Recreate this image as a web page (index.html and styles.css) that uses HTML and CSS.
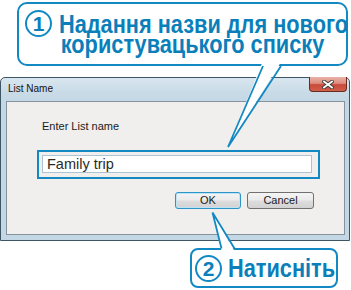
FILE: index.html
```html
<!DOCTYPE html>
<html>
<head>
<meta charset="utf-8">
<link rel="stylesheet" href="styles.css">
</head>
<body>
<div class="page">
  <div class="callout callout-top">
    <span class="num">1</span>
    <div class="ctext">
      <div class="line1">Надання назви для нового</div>
      <div class="line2">користувацького списку</div>
    </div>
  </div>
  <div class="window">
    <div class="titlebar">
      <span class="title">List Name</span>
      <span class="close">
        <svg width="12" height="9" viewBox="0 0 12 9"><path d="M2 1.5 L10 7.5 M10 1.5 L2 7.5" stroke="#3a3a3a" stroke-width="3.6" stroke-linecap="square"/><path d="M2 1.5 L10 7.5 M10 1.5 L2 7.5" stroke="#ffffff" stroke-width="1.8" stroke-linecap="square"/></svg>
      </span>
    </div>
    <div class="panel">
      <div class="label">Enter List name</div>
      <div class="highlight"><div class="input">Family trip</div></div>
      <div class="buttons">
        <div class="btn btn-ok">OK</div>
        <div class="btn">Cancel</div>
      </div>
    </div>
  </div>
  <div class="callout callout-bottom">
    <span class="num">2</span>
    <span class="ctext">Натисніть</span>
  </div>
  <svg class="tails" width="351" height="290" viewBox="0 0 351 290">
    <polygon points="262.5,62 228,147 281,62" fill="#ffffff"/>
    <polyline points="263,66 228,147 281,66" fill="none" stroke="#1389c4" stroke-width="1.8" stroke-linejoin="miter"/>
    <polygon points="212.5,212.5 221.5,251 234.5,251" fill="#ffffff"/>
    <polyline points="221.5,248.5 212.5,212.5 234.5,248.5" fill="none" stroke="#1389c4" stroke-width="1.8"/>
  </svg>
</div>
</body>
</html>
```
FILE: styles.css
```css
* { box-sizing: border-box; }
html, body { margin: 0; padding: 0; background: #ffffff; }
.page {
  position: relative;
  width: 351px;
  height: 290px;
  overflow: hidden;
  font-family: "Liberation Sans", Arial, sans-serif;
}
.callout {
  border: 2px solid #1389c4;
  background: #ffffff;
  display: flex;
  align-items: flex-start;
  color: #0b7fba;
  font-family: "Liberation Sans", Arial, sans-serif;
  font-weight: bold;
}
.callout-top {
  margin: 2px 0 0 17px;
  width: 331px;
  height: 64px;
  border-radius: 10px;
  padding: 6px 0 0 6px;
}
.num {
  flex: none;
  width: 27px;
  height: 27px;
  border: 2px solid #1389c4;
  border-radius: 50%;
  display: flex;
  align-items: center;
  justify-content: center;
  font-family: "Liberation Sans", Arial, sans-serif;
  font-size: 21px;
  line-height: 1;
  font-weight: bold;
  color: #0b7fba;
}
.ctext {
  transform: scaleX(0.87);
  transform-origin: 0 0;
  white-space: nowrap;
  font-size: 25px;
}
.callout-top .ctext {
  margin: 4px 0 0 7px;
  line-height: 20px;
}
.callout-top .line2 { padding-left: 2px; }
.window {
  margin-top: 11px;
  width: 350px;
  height: 164px;
  border: 1px solid #3e5566;
  border-radius: 5px 5px 0 0;
  background: linear-gradient(#d9e6ef 0px, #c9dbe7 14px, #c3d7e4 24px, #c3d7e4 100%);
}
.titlebar {
  height: 23px;
  display: flex;
  justify-content: space-between;
  align-items: flex-start;
}
.title {
  font-size: 10px;
  line-height: 12px;
  color: #111;
  margin: 5px 0 0 7px;
}
.close {
  width: 38px;
  height: 15px;
  margin-right: 2px;
  margin-top: -1px;
  border: 1px solid #6b2a20;
  border-top: none;
  border-radius: 0 0 4px 4px;
  background: linear-gradient(#eab2a6 0%, #de8e80 45%, #c8493a 55%, #d0604c 100%);
  display: flex;
  align-items: center;
  justify-content: center;
}
.close svg { display: block; }
.panel {
  margin-left: 5px;
  width: 339px;
  height: 134px;
  border: 1px solid #85939e;
  background: #f0efed;
  padding: 18px 0 0 30px;
}
.label {
  font-size: 11px;
  line-height: 13px;
  color: #1a1a1a;
  margin-left: 5px;
}
.highlight {
  margin-top: 17px;
  width: 283px;
  height: 29px;
  border: 2px solid #1389c4;
  padding: 3px 0 0 3px;
}
.input {
  width: 270px;
  height: 18px;
  border: 1px solid #abc3d3;
  background: #ffffff;
  font-size: 14.5px;
  line-height: 16px;
  color: #2a2a2a;
  padding-left: 4px;
}
.buttons {
  margin-top: 13px;
  display: flex;
  gap: 6px;
  padding-left: 138px;
}
.btn {
  width: 67px;
  height: 17px;
  border: 1px solid #707070;
  border-radius: 3px;
  background: linear-gradient(#f4f4f4 0%, #ebebeb 48%, #dddddd 52%, #d2d2d2 100%);
  font-size: 11px;
  line-height: 15px;
  text-align: center;
  color: #1a1a1a;
}
.btn-ok {
  width: 66px;
  border-color: #2b94c9;
  box-shadow: inset 0 0 0 1px #bfe3f3;
}
.callout-bottom {
  margin: 7px 0 0 190px;
  width: 148px;
  height: 40px;
  border-radius: 8px;
  padding: 5px 0 0 3px;
}
.callout-bottom .ctext {
  margin: 1px 0 0 6px;
  line-height: 24px;
}
.tails {
  position: absolute;
  left: 0;
  top: 0;
  pointer-events: none;
}
```
